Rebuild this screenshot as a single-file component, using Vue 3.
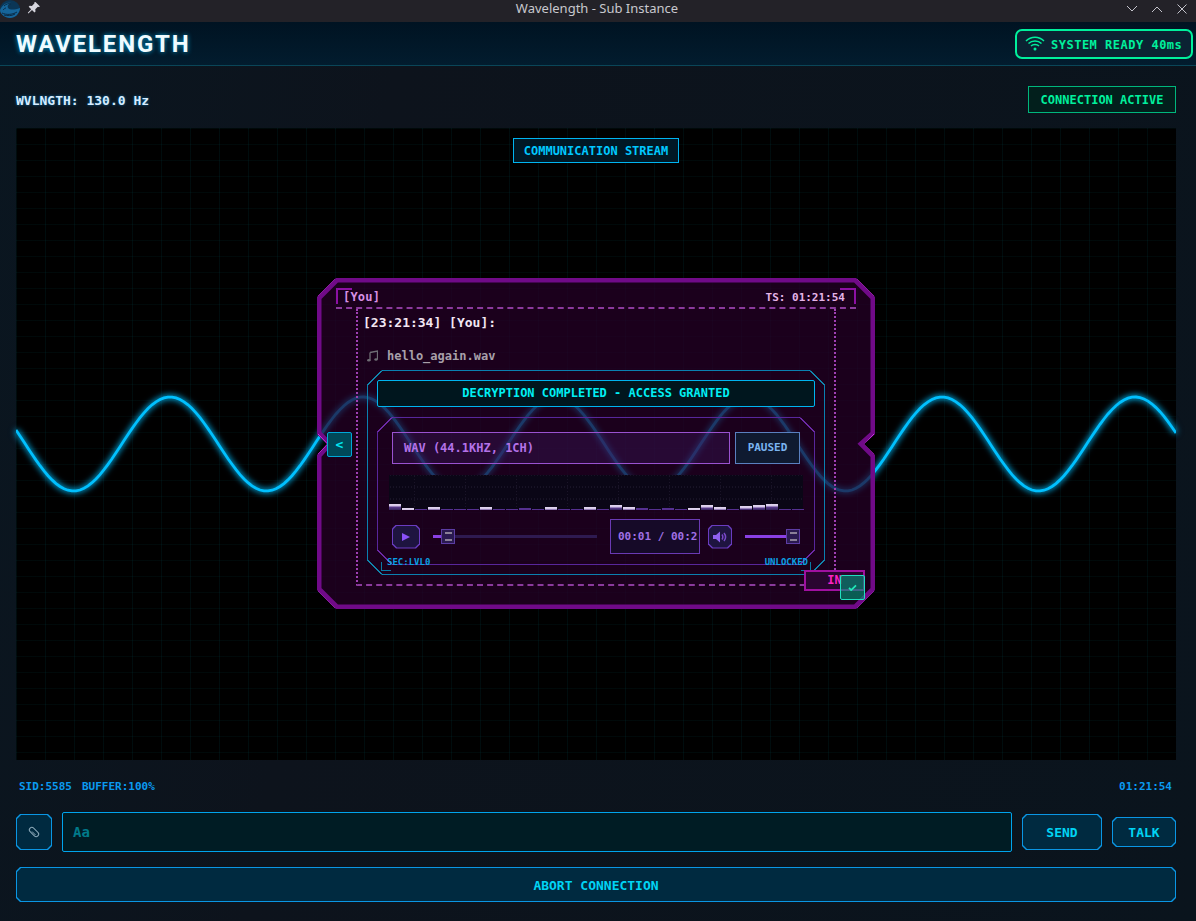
<template>
  <div class="app">
    <div class="titlebar">
      <div class="tb-left">
        <svg class="logo" viewBox="0 0 20 18">
          <ellipse cx="10" cy="9" rx="10" ry="9" fill="#0b3656" />
          <path d="M0 10c3-6 7-8 11-7-3 1-4 3-3 5 2 2 6 2 12 0v1c-1 5-5 9-10 9S0 14 0 10z" fill="#16659a" />
          <path d="M2 13c4 2 10 2 15-1M4 15c3 1 8 1 11-1M4 6c2-2 5-3 7-2M3 10c1-1 2-2 3-2" stroke="#0a2a44" stroke-width="1" fill="none" />
        </svg>
        <svg class="pin" viewBox="0 0 14 14">
          <path d="M8.500 1l4.500 4.500-1.200.6-.9-.4-2.600 2.600.2 2.200-1 1-2.500-2.500-3.600 3.400-.6-.6 3.400-3.600L1.700 5.700l1-1 2.200.2 2.600-2.600-.4-.9z" fill="#d6d6de" />
        </svg>
      </div>
      <div class="tb-title">Wavelength - Sub Instance</div>
      <div class="tb-right">
        <svg viewBox="0 0 12 8"><path d="M1 1l5 5 5-5" /></svg>
        <svg viewBox="0 0 12 8"><path d="M1 7l5-5 5 5" /></svg>
        <svg viewBox="0 0 12 12"><path d="M1.500 1.500l9 9M10.500 1.500l-9 9" /></svg>
      </div>
    </div>

    <header class="header">
      <div class="brand">WAVELENGTH</div>
      <div class="sys-pill">
        <svg class="wifi" viewBox="0 0 20 15">
          <path d="M1 5c5-5 13-5 18 0M3.500 7.500c3.500-3.500 9.500-3.500 13 0M6 10c2-2 6-2 8 0" />
          <circle cx="10" cy="13" r="1.500" />
        </svg>
        <span>SYSTEM READY 40ms</span>
      </div>
    </header>

    <main class="main">
      <div class="top-row">
        <div class="freq">WVLNGTH: 130.0 Hz</div>
        <div class="conn">CONNECTION ACTIVE</div>
      </div>

      <section class="stream">
        <svg class="wave" viewBox="0 0 1160 632">
          <path :d="wavePath" />
        </svg>
        <div class="stream-tag">COMMUNICATION STREAM</div>

        <article class="card">
          <svg class="card-frame" viewBox="0 0 558 331">
            <polygon class="cf-band" points="19,0 539,0 558,19 558,156 547,166 558,177 558,312 539,331 19,331 0,312 0,177 10,166 0,156 0,19" />
            <path class="cf-hi" d="M1 18L18 1M540 1L557 18M1 313L18 330M540 330L557 313M1 156L10.500 166L1 176M557 156L547.500 166L557 176" />
          </svg>

          <div class="card-head">
            <span class="who">[You]</span>
            <span class="ts">TS: 01:21:54</span>
          </div>

          <div class="card-body">
            <div class="sender">[23:21:34] [You]:</div>
            <div class="file">
              <svg class="note" viewBox="0 0 11 12">
                <path d="M3 2.500L10.500 1v8.500M3 2.500V10.500" />
                <ellipse cx="1.800" cy="10.300" rx="1.700" ry="1.300" />
                <ellipse cx="9" cy="9.500" rx="1.700" ry="1.300" />
              </svg>
              <span>hello_again.wav</span>
            </div>

            <div class="player">
              <svg class="player-frame" viewBox="0 0 458 205">
                <polygon class="pf-line" points="15,.5 443,.5 457.500,15 457.500,190 443,204.500 15,204.500 .5,190 .5,15" />
                <path class="pf-hi" d="M.5 15L15 .5M443 .5L457.500 15M.5 190L15 204.500M443 204.500L457.500 190" />
              </svg>
              <div class="banner">DECRYPTION COMPLETED - ACCESS GRANTED</div>

              <div class="deck">
                <svg class="deck-frame" viewBox="0 0 438 148">
                  <polygon class="df-line" points="15,.5 423,.5 437.500,15 437.500,133 423,147.500 15,147.500 .5,133 .5,15" />
                  <path class="df-hi" d="M.5 15L15 .5M423 .5L437.500 15M.5 133L15 147.500M423 147.500L437.500 133" />
                </svg>
                <div class="format-row">
                  <div class="format">WAV (44.1KHZ, 1CH)</div>
                  <div class="paused">PAUSED</div>
                </div>

                <div class="viz">
                  <div
                    v-for="(b, i) in bars"
                    :key="i"
                    class="bar"
                    :class="{ lit: b.lit }"
                    :style="{ height: b.h + 'px' }"
                  ></div>
                </div>

                <div class="controls">
                  <button class="ctl-btn play">
                    <svg viewBox="0 0 10 10"><path d="M1 1l8 4-8 4z" /></svg>
                  </button>
                  <div class="slider seek">
                    <div class="fill seek-fill"></div>
                    <div class="thumb seek-thumb"></div>
                  </div>
                  <div class="time">00:01 / 00:2</div>
                  <button class="ctl-btn vol">
                    <svg viewBox="0 0 14 12">
                      <path class="spk" d="M0 4h3l4-3.500v11L3 8H0z" />
                      <path class="spk-w" d="M9 3.500c1 1.500 1 3.500 0 5M11 2c2 2.500 2 5.500 0 8" />
                    </svg>
                  </button>
                  <div class="slider volume">
                    <div class="fill vol-fill"></div>
                    <div class="thumb vol-thumb"></div>
                  </div>
                </div>
              </div>

              <span class="corner-l"></span>
              <span class="corner-r"></span>
              <span class="lbl lbl-l">SEC:LVL0</span>
              <span class="lbl lbl-r">UNLOCKED</span>
            </div>
          </div>

          <button class="nav-btn">&lt;</button>
          <div class="in-tag">IN</div>
          <button class="check-btn">
            <svg viewBox="0 0 10 8"><path d="M1 4.500l2.500 2.500L9 1.500" /></svg>
          </button>
        </article>
      </section>

      <div class="status-row">
        <div class="status-left"><span>SID:5585</span><span>BUFFER:100%</span></div>
        <span>01:21:54</span>
      </div>

      <div class="input-row">
        <button class="cut attach">
          <svg viewBox="0 0 14 14">
            <rect x="1.500" y="4.500" width="11" height="5" rx="2.500" transform="rotate(45 7 7)" />
            <path d="M5 6.500l3.500 3.500" />
          </svg>
        </button>
        <div class="msg-input">Aa</div>
        <button class="cut send">SEND</button>
        <button class="cut talk">TALK</button>
      </div>

      <button class="cut abort">ABORT CONNECTION</button>
    </main>
  </div>
</template>

<script setup>
import { computed } from 'vue'

// wave is drawn in stream coordinates, 1160 x 632
const wavePath = computed(() => {
  let d = ''
  for (let x = 0; x <= 1160; x += 4) {
    const y = 316 - 47 * Math.cos((2 * Math.PI * (x - 154)) / 193)
    d += (x === 0 ? 'M' : 'L') + x + ' ' + y.toFixed(1)
  }
  return d
})

const heights = [6, 2, 1, 3, 1, 1, 1, 3, 1, 1, 2, 1, 3, 1, 1, 3, 1, 5, 3, 2, 1, 2, 1, 2, 5, 3, 1, 4, 5, 6, 1, 1]
const litBars = [0, 1, 3, 7, 12, 15, 17, 18, 23, 24, 25, 27, 28, 29]
const bars = heights.map((h, i) => ({ h, lit: litBars.includes(i) }))
</script>

<style>
html, body {
  margin: 0;
  background: #0b141d;
}
</style>

<style scoped>
.app {
  width: 1196px;
  height: 921px;
  overflow: hidden;
  display: flex;
  flex-direction: column;
  background: linear-gradient(100deg, #0a1620 0, #0d131c 30%, #0a141d 100%);
  font-family: "DejaVu Sans Mono", "Liberation Mono", monospace;
}

button {
  font-family: inherit;
  border: none;
  padding: 0;
  margin: 0;
}

.titlebar {
  height: 22px;
  flex: none;
  display: flex;
  align-items: flex-start;
  justify-content: space-between;
  position: relative;
  background: #232228;
}
.tb-left {
  display: flex;
  align-items: flex-start;
}
.logo {
  width: 20px;
  height: 18px;
}
.pin {
  width: 14px;
  height: 14px;
  margin-left: 7px;
  margin-top: 1px;
}
.tb-title {
  position: absolute;
  left: 0;
  right: 0;
  top: -3px;
  text-align: center;
  font: 13px/22px "Noto Sans", sans-serif;
  color: #c8c8ce;
  margin-left: -2px;
}
.tb-right {
  display: flex;
  align-items: flex-start;
  gap: 13px;
  padding: 4px 8px 0 0;
}
.tb-right svg {
  width: 12px;
  height: 8px;
  margin-top: 1px;
  overflow: visible;
}
.tb-right svg:last-child {
  height: 12px;
  margin-top: -1px;
}
.tb-right path {
  fill: none;
  stroke: #c4c4cc;
  stroke-width: 1;
}

.header {
  height: 43px;
  flex: none;
  display: flex;
  align-items: center;
  justify-content: space-between;
  padding: 0 3px 0 16px;
  background: linear-gradient(180deg, #001322 0, #021c2e 100%);
  border-bottom: 1px solid #0a4658;
}
.brand {
  font: 700 24px/28px Roboto, sans-serif;
  letter-spacing: 1.800px;
  color: #f0fbff;
  text-shadow: 0 0 5px rgba(0, 191, 255, 0.8);
}
.sys-pill {
  width: 178px;
  height: 30px;
  box-sizing: border-box;
  display: flex;
  align-items: center;
  padding-left: 8px;
  border: 2px solid #00f09c;
  border-radius: 7px;
  background: #0b2333;
  color: #00f09c;
  font-weight: 700;
  font-size: 12px;
  letter-spacing: 0.5px;
  line-height: 16px;
  white-space: nowrap;
}
.sys-pill span {
  padding-top: 2px;
}
.wifi {
  width: 20px;
  height: 15px;
  margin-right: 6px;
}
.wifi path {
  fill: none;
  stroke: #00f09c;
  stroke-width: 1.500;
}
.wifi circle {
  fill: #00f09c;
}

.main {
  padding: 20px 20px 0 16px;
}
.top-row {
  height: 27px;
  display: flex;
  align-items: center;
  justify-content: space-between;
  margin-bottom: 15px;
}
.freq {
  font-size: 13px;
  font-weight: 700;
  color: #d6ecff;
  text-shadow: 0 0 3px rgba(0, 160, 255, 0.6);
  margin-top: 2px;
}
.conn {
  width: 148px;
  height: 27px;
  box-sizing: border-box;
  text-align: center;
  border: 1px solid #00b67c;
  background: #021f1c;
  color: #00f09c;
  font-size: 12px;
  font-weight: 700;
  line-height: 27px;
}

.stream {
  position: relative;
  height: 632px;
  box-sizing: border-box;
  padding-bottom: 1px;
  display: flex;
  align-items: center;
  justify-content: center;
  background-color: #000;
  background-image:
    linear-gradient(to right, rgba(0, 210, 230, 0.06) 1px, transparent 1px),
    linear-gradient(to bottom, rgba(0, 210, 230, 0.045) 1px, transparent 1px);
  background-size: 29px 100%, 100% 16px;
}
.wave {
  position: absolute;
  inset: 0;
  width: 100%;
  height: 100%;
  filter: drop-shadow(0 0 3px rgba(0, 191, 255, 0.9)) drop-shadow(0 0 2px rgba(0, 191, 255, 0.5));
}
.wave path {
  fill: none;
  stroke: #00c0ff;
  stroke-width: 2.800;
}
.stream-tag {
  position: absolute;
  top: 10px;
  left: 497px;
  width: 166px;
  height: 25px;
  box-sizing: border-box;
  text-align: center;
  border: 1px solid #00b4f0;
  background: #001825;
  color: #00c8ff;
  font-size: 12px;
  font-weight: 700;
  line-height: 25px;
  white-space: nowrap;
}

.card {
  position: relative;
  width: 558px;
  height: 331px;
  box-sizing: border-box;
  padding: 10px 19px 0;
  background: rgba(38, 0, 40, 0.7);
  clip-path: polygon(19px 0, 539px 0, 558px 19px, 558px 156px, 547px 166px, 558px 177px, 558px 312px, 539px 331px, 19px 331px, 0 312px, 0 177px, 10px 166px, 0 156px, 0 19px);
}
.card-frame {
  position: absolute;
  inset: 0;
  width: 100%;
  height: 100%;
  pointer-events: none;
}
.cf-band {
  fill: none;
  stroke: #700a88;
  stroke-width: 9;
}
.cf-hi {
  fill: none;
  stroke: #d036e8;
  stroke-width: 1;
}
.card-head {
  position: relative;
  height: 19px;
  display: flex;
  justify-content: space-between;
  align-items: center;
  padding: 0 11px 0 7px;
  border-bottom: 2px dashed #8a3a9c;
}
.card-head::before,
.card-head::after {
  content: "";
  position: absolute;
  top: 0;
  width: 14px;
  height: 14px;
  border-top: 2px solid #8c10a4;
}
.card-head::before {
  left: 0;
  border-left: 2px solid #8c10a4;
}
.card-head::after {
  right: 0;
  border-right: 2px solid #8c10a4;
}
.who {
  font-size: 12px;
  font-weight: 700;
  letter-spacing: 0.2px;
  color: #d890e4;
  margin-top: -1px;
}
.ts {
  font-size: 11px;
  font-weight: 700;
  color: #e4b4e8;
}
.card-body {
  width: 480px;
  height: 277px;
  box-sizing: border-box;
  margin: 0 auto;
  border-left: 2px dotted #a040b4;
  border-right: 2px dotted #a040b4;
  border-bottom: 2px dashed #8a3a9c;
}
.sender {
  padding: 6px 0 0 5px;
  font-size: 13px;
  font-weight: 700;
  line-height: 16px;
  color: #f2e6f2;
}
.file {
  margin-top: 17px;
  padding-left: 9px;
  font-size: 12px;
  font-weight: 700;
  line-height: 16px;
  color: #a8a0aa;
  display: flex;
  align-items: center;
}
.note {
  width: 11px;
  height: 12px;
  margin-right: 9px;
}
.note path {
  fill: none;
  stroke: #6e6c74;
  stroke-width: 1.300;
}
.note ellipse {
  fill: #6e6c74;
}
.player {
  position: relative;
  width: 458px;
  height: 205px;
  box-sizing: border-box;
  margin: 6px 0 0 9px;
  padding: 10px;
}
.player-frame,
.deck-frame {
  position: absolute;
  inset: 0;
  width: 100%;
  height: 100%;
  pointer-events: none;
}
.pf-line {
  fill: none;
  stroke: #0a80b0;
}
.pf-hi {
  fill: none;
  stroke: #10c8f0;
}
.df-line {
  fill: none;
  stroke: #58269c;
}
.df-hi {
  fill: none;
  stroke: #a040f0;
}
.banner {
  position: relative;
  height: 27px;
  box-sizing: border-box;
  border: 1px solid #00b4f0;
  border-radius: 2px;
  background: #00161e;
  color: #00f0f4;
  text-align: center;
  font-size: 12px;
  font-weight: 700;
  line-height: 25px;
}
.deck {
  position: relative;
  height: 148px;
  box-sizing: border-box;
  margin-top: 10px;
  padding: 15px 15px 0;
}
.format-row {
  display: flex;
  gap: 5px;
  height: 32px;
}
.format {
  flex: 1;
  box-sizing: border-box;
  padding-left: 11px;
  border: 1px solid #9a52d0;
  background: rgba(70, 30, 110, 0.3);
  color: #b472e8;
  font-size: 12px;
  font-weight: 700;
  line-height: 30px;
}
.paused {
  width: 65px;
  box-sizing: border-box;
  border: 1px solid #5a80c0;
  background: #0f1a30;
  color: #7ab4f0;
  text-align: center;
  font-size: 11px;
  font-weight: 700;
  line-height: 30px;
}
.viz {
  height: 35px;
  margin: 11px -3px 0;
  display: flex;
  align-items: flex-end;
  background-color: #0a0616;
  background-image:
    radial-gradient(circle, rgba(120, 110, 150, 0.14) 0.5px, transparent 1px),
    radial-gradient(circle, rgba(120, 110, 150, 0.12) 0.5px, transparent 1px);
  background-size: 51px 3px, 3px 12px;
  background-position: 0 0, 0 6px;
}
.bar {
  width: 12px;
  margin-right: 1px;
  flex: none;
  background: #553090;
}
.bar.lit {
  background: linear-gradient(180deg, #e4d8f0 0, #d4c6e8 2px, #5c3c90 3px, #35245c 100%);
}
.controls {
  height: 35px;
  margin-top: 9px;
  display: flex;
  align-items: center;
}
.ctl-btn {
  position: relative;
  height: 24px;
  background: #6a3cc0;
  clip-path: polygon(4px 0, calc(100% - 4px) 0, 100% 4px, 100% calc(100% - 4px), calc(100% - 4px) 100%, 4px 100%, 0 calc(100% - 4px), 0 4px);
  display: flex;
  align-items: center;
  justify-content: center;
  flex: none;
}
.ctl-btn::before {
  content: "";
  position: absolute;
  inset: 1px;
  background: #1e1440;
  clip-path: polygon(4px 0, calc(100% - 4px) 0, 100% 4px, 100% calc(100% - 4px), calc(100% - 4px) 100%, 4px 100%, 0 calc(100% - 4px), 0 4px);
}
.ctl-btn svg {
  position: relative;
}
.play {
  width: 28px;
}
.play svg {
  width: 10px;
  height: 10px;
}
.play path {
  fill: #8a50f8;
}
.vol {
  width: 24px;
  margin-left: 8px;
}
.vol svg {
  width: 14px;
  height: 12px;
}
.spk {
  fill: #9060f0;
}
.spk-w {
  fill: none;
  stroke: #7848c8;
  stroke-width: 1.500;
}
.slider {
  position: relative;
  height: 3px;
  flex: none;
  background: #2e1a50;
}
.seek {
  width: 164px;
  margin-left: 13px;
}
.volume {
  width: 55px;
  margin-left: 13px;
}
.fill {
  height: 100%;
  background: #8a40e4;
}
.seek-fill {
  width: 12px;
}
.vol-fill {
  width: 48px;
}
.thumb {
  position: absolute;
  top: -6px;
  width: 14px;
  height: 15px;
  box-sizing: border-box;
  border: 1px solid #5c3ca4;
  background:
    linear-gradient(#8a8098, #8a8098) center 2px / 7px 2px no-repeat,
    linear-gradient(#8a8098, #8a8098) center 9px / 7px 2px no-repeat,
    #2a1a50;
}
.seek-thumb {
  left: 8px;
}
.vol-thumb {
  right: 0;
}
.time {
  width: 90px;
  height: 35px;
  box-sizing: border-box;
  margin-left: 13px;
  flex: none;
  border: 1px solid #6a3ab4;
  background: #160a28;
  padding-left: 7px;
  color: #a070e4;
  font-size: 11px;
  font-weight: 700;
  line-height: 33px;
  white-space: nowrap;
}
.corner-l,
.corner-r {
  position: absolute;
  top: 192px;
  width: 9px;
  height: 8px;
  border-bottom: 1px solid #0a7aa4;
}
.corner-l {
  left: 14px;
  border-left: 1px solid #0a7aa4;
}
.corner-r {
  right: 14px;
  border-right: 1px solid #0a7aa4;
}
.lbl {
  position: absolute;
  top: 186px;
  font-size: 9px;
  font-weight: 700;
  line-height: 12px;
  color: #0aa0e4;
}
.lbl-l {
  left: 20px;
}
.lbl-r {
  right: 17px;
}
.nav-btn {
  position: absolute;
  left: 10px;
  top: 154px;
  width: 25px;
  height: 25px;
  box-sizing: border-box;
  border: 1px solid #00a8d8;
  border-radius: 2px;
  background: #004858;
  color: #00e8f0;
  font-size: 13px;
  font-weight: 700;
}
.in-tag {
  position: absolute;
  left: 487px;
  top: 292px;
  width: 61px;
  height: 21px;
  box-sizing: border-box;
  border: 2px solid #a010a0;
  background: #2a0530;
  color: #ff22c4;
  text-align: center;
  font-size: 12px;
  font-weight: 700;
  line-height: 17px;
}
.check-btn {
  position: absolute;
  left: 523px;
  top: 297px;
  width: 25px;
  height: 25px;
  box-sizing: border-box;
  border: 1px solid #20e0c0;
  border-radius: 2px;
  background: rgba(0, 150, 120, 0.62);
  display: flex;
  align-items: center;
  justify-content: center;
}
.check-btn svg {
  width: 9px;
  height: 7px;
}
.check-btn path {
  fill: none;
  stroke: #20e8b8;
  stroke-width: 2;
}

.status-row {
  display: flex;
  justify-content: space-between;
  margin-top: 20px;
  margin-bottom: -1px;
  padding: 0 4px 0 3px;
  font-size: 11px;
  font-weight: 700;
  line-height: 14px;
  color: #0a9af0;
}
.status-left {
  display: flex;
  gap: 10px;
}

.input-row {
  height: 40px;
  margin-top: 19px;
  display: flex;
  align-items: center;
  gap: 10px;
}
.cut {
  --cut: 4px;
  position: relative;
  z-index: 0;
  background: #0a96e4;
  color: #00d4f4;
  font-size: 13px;
  font-weight: 700;
  clip-path: polygon(var(--cut) 0, calc(100% - var(--cut)) 0, 100% var(--cut), 100% calc(100% - var(--cut)), calc(100% - var(--cut)) 100%, var(--cut) 100%, 0 calc(100% - var(--cut)), 0 var(--cut));
}
.cut::before {
  content: "";
  position: absolute;
  inset: 1px;
  z-index: -1;
  background: #002a40;
  clip-path: polygon(var(--cut) 0, calc(100% - var(--cut)) 0, 100% var(--cut), 100% calc(100% - var(--cut)), calc(100% - var(--cut)) 100%, var(--cut) 100%, 0 calc(100% - var(--cut)), 0 var(--cut));
}
.attach {
  width: 36px;
  height: 36px;
  flex: none;
  display: flex;
  align-items: center;
  justify-content: center;
}
.attach svg {
  width: 14px;
  height: 14px;
}
.attach rect,
.attach path {
  fill: none;
  stroke: #8aa8b8;
  stroke-width: 1;
}
.msg-input {
  flex: 1;
  height: 40px;
  box-sizing: border-box;
  padding-left: 10px;
  border: 1px solid #00a4ec;
  border-radius: 2px;
  background: #001c24;
  color: #007a8a;
  font-size: 14px;
  font-weight: 700;
  line-height: 38px;
}
.send {
  width: 80px;
  height: 36px;
  flex: none;
}
.talk {
  width: 64px;
  height: 30px;
  flex: none;
}
.abort {
  display: block;
  width: 100%;
  height: 35px;
  margin-top: 15px;
  padding-top: 2px;
}
</style>
